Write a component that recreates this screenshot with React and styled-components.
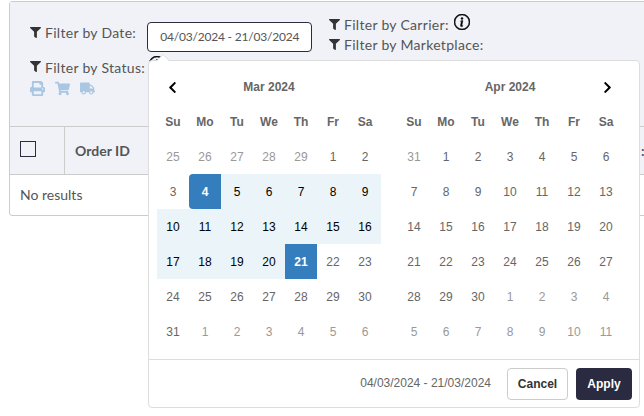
import React from 'react'
import styled, { createGlobalStyle } from 'styled-components'
import { FaFilter, FaPrint, FaShoppingCart, FaTruck, FaChevronLeft, FaChevronRight } from 'react-icons/fa'
import { BsInfoCircle } from 'react-icons/bs'

const Global = createGlobalStyle`
html, body { margin:0; padding:0; background:#fff; overflow:hidden; }
body { width:644px; height:416px; }
`

const WEEK = ['Su', 'Mo', 'Tu', 'We', 'Th', 'Fr', 'Sa']

function range(from, to) {
    const out = []
    for (let i = from; i <= to; i++) out.push(i)
    return out
}

const off = (days) => days.map((d) => ({ d, kind: 'off' }))
const on = (days) => days.map((d) => ({ d, kind: 'on' }))

const march = [
    ...off(range(25, 29)),
    ...on([1, 2, 3]),
    { d: 4, kind: 'start' },
    ...range(5, 20).map((d) => ({ d, kind: 'in' })),
    { d: 21, kind: 'end' },
    ...on(range(22, 31)),
    ...off(range(1, 6)),
]

const april = [
    ...off([31]),
    ...on(range(1, 30)),
    ...off(range(1, 11)),
]

function Calendar({ title, days, prev, next }) {
    return (
        <Month>
            <MonthHead>
                <Arrow $left={prev}>{prev && <FaChevronLeft />}{next && <FaChevronRight />}</Arrow>
                <MonthName>{title}</MonthName>
            </MonthHead>
            <Grid>
                {WEEK.map((w) => <WeekDay key={w}>{w}</WeekDay>)}
                {days.map((c, i) => <Day key={i} $kind={c.kind}>{c.d}</Day>)}
            </Grid>
        </Month>
    )
}

function Label({ children }) {
    return (
        <FilterLabel>
            <FaFilter />
            {children}
        </FilterLabel>
    )
}

export default function App() {
    return (
        <Page>
            <Global />
            <Panel>
                <Filters>
                    <LeftFilters>
                        <DateRow>
                            <Label>Filter by Date:</Label>
                            <DateInput>04/03/2024 - 21/03/2024</DateInput>
                        </DateRow>
                        <StatusRow>
                            <Label>Filter by Status:</Label>
                            <InfoIcon />
                        </StatusRow>
                        <Actions>
                            <FaPrint />
                            <FaShoppingCart />
                            <FaTruck />
                        </Actions>
                    </LeftFilters>
                    <RightFilters>
                        <CarrierRow>
                            <Label>Filter by Carrier:</Label>
                            <InfoIcon />
                        </CarrierRow>
                        <Label>Filter by Marketplace:</Label>
                    </RightFilters>
                </Filters>
                <HeadRow>
                    <CheckCell><Check /></CheckCell>
                    <HeadCell>Order ID</HeadCell>
                    <Clipped>:</Clipped>
                </HeadRow>
                <Empty>No results</Empty>
            </Panel>

            <Picker>
                <Calendars>
                    <Calendar title="Mar 2024" days={march} prev />
                    <Calendar title="Apr 2024" days={april} next />
                </Calendars>
                <Footer>
                    <Selected>04/03/2024 - 21/03/2024</Selected>
                    <CancelButton>Cancel</CancelButton>
                    <ApplyButton>Apply</ApplyButton>
                </Footer>
            </Picker>
        </Page>
    )
}

const Page = styled.div`
position:relative;
width:644px;
height:416px;
overflow:hidden;
padding:1px 0 0 9px;
box-sizing:border-box;
`

const Panel = styled.div`
width:700px;
background:#fff;
border:1px solid #ccc;
border-radius:3px;
font-family:"Lato","Open Sans",sans-serif;
font-size:14px;
color:#555;
`

const Filters = styled.div`
display:flex;
height:124px;
box-sizing:border-box;
background:#f0f2f8;
padding-left:20px;
`

const LeftFilters = styled.div`
width:299px;
padding-top:20px;
`

const RightFilters = styled.div`
display:flex;
flex-direction:column;
padding-top:12px;
`

const FilterLabel = styled.div`
display:flex;
align-items:center;
gap:4px;
height:20px;
color:#555;
letter-spacing:0.3px;
svg { color:#333; font-size:11px; }
`

const DateRow = styled.div`
display:flex;
gap:11px;
height:30px;
align-items:flex-start;
`

const DateInput = styled.div`
width:165px;
height:30px;
box-sizing:border-box;
border:1px solid #2a2c40;
border-radius:4px;
background:#fff;
font-size:12px;
line-height:28px;
padding-left:12px;
color:#555;
letter-spacing:-0.2px;
`

const StatusRow = styled.div`
display:flex;
gap:4px;
align-items:flex-start;
margin-top:5px;
svg { margin-top:-1px; }
`

const Actions = styled.div`
display:flex;
gap:10px;
margin-top:2px;
color:#a9c6e2;
font-size:15px;
height:18px;
align-items:center;
`

const CarrierRow = styled.div`
display:flex;
gap:5px;
align-items:flex-start;
`

const InfoIcon = styled(BsInfoCircle)`
color:#000;
font-size:16px;
stroke:#000;
stroke-width:0.5px;
flex:none;
`

const HeadRow = styled.div`
display:flex;
height:47px;
background:#f0f2f8;
border-top:1px solid #ccc;
border-bottom:1px solid #ccc;
`

const CheckCell = styled.div`
width:44px;
border-right:1px solid #ccc;
display:flex;
align-items:center;
padding-left:10px;
`

const Check = styled.div`
width:16px;
height:16px;
margin-bottom:3px;
box-sizing:border-box;
border:1px solid #2a2c40;
background:transparent;
`

const HeadCell = styled.div`
display:flex;
align-items:center;
padding-left:10px;
width:566px;
font-weight:700;
color:#555;
`

const Clipped = styled.div`
display:flex;
align-items:center;
font-weight:700;
color:#555;
`

const Empty = styled.div`
height:40px;
line-height:40px;
padding-left:10px;
color:#555;
`

const Picker = styled.div`
position:absolute;
left:148px;
top:60px;
width:492px;
height:348px;
box-sizing:border-box;
background:#fff;
border:1px solid #ddd;
border-radius:4px;
font-family:"Liberation Sans",Arial,sans-serif;
font-size:12px;
color:#666;
&::before, &::after {
    content:"";
    position:absolute;
    width:0;
    height:0;
    border-style:solid;
}
&::before {
    left:7px;
    top:-7px;
    border-width:0 7px 7px 7px;
    border-color:transparent transparent #ddd transparent;
}
&::after {
    left:8px;
    top:-6px;
    border-width:0 6px 6px 6px;
    border-color:transparent transparent #fff transparent;
}
`

const Calendars = styled.div`
display:flex;
gap:17px;
padding:8px 8px 0;
height:290px;
box-sizing:border-box;
`

const Month = styled.div`
width:224px;
`

const MonthHead = styled.div`
position:relative;
height:35px;
display:flex;
align-items:center;
`

const Arrow = styled.div`
position:absolute;
${(p) => (p.$left ? 'left:9px;' : 'right:8px;')}
top:12px;
color:#000;
font-size:13px;
line-height:0;
`

const MonthName = styled.div`
flex:1;
text-align:center;
font-weight:700;
color:#666;
`

const Grid = styled.div`
display:grid;
grid-template-columns:repeat(7,32px);
grid-auto-rows:35px;
`

const WeekDay = styled.div`
display:flex;
align-items:center;
justify-content:center;
font-weight:700;
color:#666;
`

const dayColors = {
    off: 'color:#999;',
    on: 'color:#666;',
    in: 'color:#000;background:#ebf4f8;',
    start: 'color:#fff;background:#357ebd;border-radius:4px 0 0 4px;font-weight:700;',
    end: 'color:#fff;background:#357ebd;font-weight:700;',
}

const Day = styled.div`
display:flex;
align-items:center;
justify-content:center;
${(p) => dayColors[p.$kind]}
`

const Footer = styled.div`
height:39px;
margin-top:8px;
border-top:1px solid #ddd;
display:flex;
align-items:flex-start;
justify-content:flex-end;
padding:8px 7px 0 0;
`

const Selected = styled.div`
margin-right:16px;
line-height:30px;
color:#666;
`

const CancelButton = styled.div`
width:61px;
height:32px;
box-sizing:border-box;
border:1px solid #ccc;
border-radius:4px;
background:#fff;
color:#333;
font-weight:700;
text-align:center;
line-height:30px;
margin-right:8px;
`

const ApplyButton = styled.div`
width:56px;
height:32px;
box-sizing:border-box;
border-radius:4px;
background:#2a2a40;
color:#fff;
font-weight:700;
text-align:center;
line-height:32px;
`
